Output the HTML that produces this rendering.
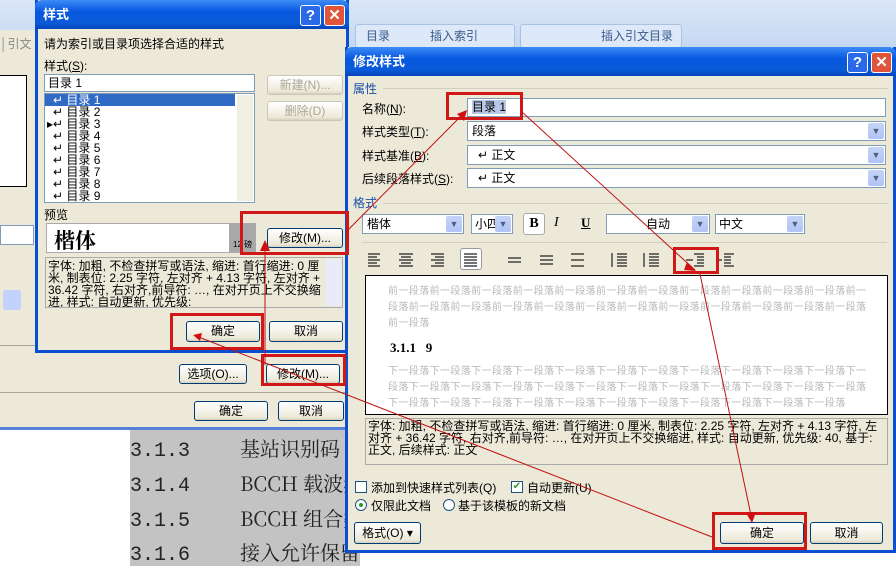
<!DOCTYPE html>
<html><head><meta charset="utf-8"><style>
*{margin:0;padding:0;box-sizing:border-box}
body{width:896px;height:566px;overflow:hidden;position:relative;background:#fff;font-family:"Liberation Sans","Noto Sans CJK SC",sans-serif;font-size:12px;color:#000}
.a{position:absolute}
.btn{position:absolute;border:1px solid #003c74;border-radius:3px;background:linear-gradient(#fff,#ece9d8 85%,#d6d0c0);text-align:center;font-size:12px;line-height:19px}
.dis{color:#aca899;border-color:#c9c7ba}
.inp{position:absolute;background:#fff;border:1px solid #7f9db9}
.dd{position:absolute;right:1px;top:1px;bottom:1px;width:16px;background:linear-gradient(#c6d3f7,#b1c4f5);border-radius:2px;color:#4d6185;font-size:9px;text-align:center;line-height:17px}
.title{position:absolute;left:0;right:0;top:0;height:29px;background:linear-gradient(#3d8cf6,#0858e0 40%,#0a5ad8 80%,#0443b8);color:#fff;font-weight:bold;font-size:13px;line-height:29px;padding-left:8px;border-radius:7px 7px 0 0}
.tb{position:absolute;top:5px;width:21px;height:21px;border:1px solid #fff;border-radius:3px;color:#fff;font-weight:bold;text-align:center;line-height:19px;font-size:15px}
.red{position:absolute;border:3px solid #d01818}
.g{color:#b8b8b8;font-size:10px;line-height:16px;letter-spacing:0.4px}
.doc{position:absolute;left:0;white-space:nowrap}
.doc b{font-weight:normal;font-family:"Liberation Mono",monospace;display:inline-block;width:110px}
</style></head><body>
<div class="a" style="left:0;top:0;width:896px;height:48px;background:linear-gradient(#dbe7f7,#c4d8f2)"></div>
<div class="a" style="left:355px;top:24px;width:160px;height:24px;background:#dde9f8;border:1px solid #aac2e3;border-radius:3px;color:#3a5a8c;font-size:12px;line-height:22px;padding-left:10px">目录&nbsp;&nbsp;&nbsp;&nbsp;&nbsp;&nbsp;&nbsp;&nbsp;&nbsp;&nbsp;&nbsp;&nbsp;插入索引</div>
<div class="a" style="left:520px;top:24px;width:162px;height:24px;background:#dde9f8;border:1px solid #aac2e3;border-radius:3px;color:#3a5a8c;font-size:12px;line-height:22px;padding-left:80px">插入引文目录</div>
<div class="a" style="left:0;top:30px;width:348px;height:400px;background:#ece9d8;border-bottom:3px solid #5a7edc"></div>
<div class="a" style="left:0;top:35px;width:34px;height:16px;color:#888;font-size:12px">│引文</div>
<div class="a" style="left:0;top:75px;width:27px;height:112px;background:#fff;border:1px solid #000;border-left:none"></div>
<div class="a" style="left:0;top:225px;width:34px;height:20px;background:#fff;border:1px solid #7f9db9"></div>
<div class="a" style="left:3px;top:290px;width:18px;height:20px;background:#c1d3fb;border-radius:2px"></div>
<div class="a" style="left:0;top:345px;width:35px;height:1px;background:#aca899"></div>
<div class="btn" style="left:179px;top:364px;width:68px;height:20px">选项(O)...</div>
<div class="btn" style="left:266px;top:364px;width:74px;height:20px">修改(M)...</div>
<div class="a" style="left:0;top:392px;width:348px;height:1px;background:#aca899"></div>
<div class="btn" style="left:194px;top:401px;width:74px;height:20px">确定</div>
<div class="btn" style="left:278px;top:401px;width:66px;height:20px">取消</div>
<div class="a" style="left:130px;top:430px;width:230px;height:136px;background:#c3c3c3;font-family:'Noto Serif CJK SC',serif;font-size:20px;color:#222;overflow:hidden">
<div class="doc" style="top:3px"><b>3.1.3</b>基站识别码</div>
<div class="doc" style="top:38px"><b>3.1.4</b>BCCH 载波频</div>
<div class="doc" style="top:73px"><b>3.1.5</b>BCCH 组合类</div>
<div class="doc" style="top:107px"><b>3.1.6</b>接入允许保留块数</div>
</div>
<div class="a" style="left:35px;top:0;width:314px;height:353px;background:#ece9d8;border:3px solid #0a4fd0;border-top:none">
<div class="title" style="left:-3px;right:-3px">样式
<div class="tb" style="right:28px;background:#2a6ae8">?</div>
<div class="tb" style="right:4px;background:#e0553a">✕</div></div>
<div class="a" style="left:6px;top:35px">请为索引或目录项选择合适的样式</div>
<div class="a" style="left:6px;top:57px">样式(<u>S</u>):</div>
<div class="inp" style="left:6px;top:74px;width:211px;height:18px;padding-left:3px;line-height:16px">目录 1</div>
<div class="inp" style="left:6px;top:93px;width:211px;height:110px;line-height:12px;font-size:12px">
<div style="background:#316ac5;color:#fff;width:190px;padding-left:8px">↵ 目录 1</div>
<div style="padding-left:8px">↵ 目录 2</div><div style="padding-left:2px">▸↵ 目录 3</div><div style="padding-left:8px">↵ 目录 4</div><div style="padding-left:8px">↵ 目录 5</div><div style="padding-left:8px">↵ 目录 6</div><div style="padding-left:8px">↵ 目录 7</div><div style="padding-left:8px">↵ 目录 8</div><div style="padding-left:8px">↵ 目录 9</div>
<div class="a" style="right:1px;top:1px;width:16px;bottom:1px;background:#f1efe2"></div></div>
<div class="btn dis" style="left:229px;top:75px;width:76px;height:20px">新建(N)...</div>
<div class="btn dis" style="left:229px;top:101px;width:76px;height:20px">删除(D)</div>
<div class="a" style="left:6px;top:206px">预览</div>
<div class="a" style="left:8px;top:223px;width:210px;height:30px;background:#fff;border:1px solid #aaa">
<div class="a" style="left:7px;top:1px;font-size:21px;font-weight:bold;font-family:'Noto Serif CJK SC',serif">楷体</div>
<div class="a" style="right:0;top:0;width:26px;height:28px;background:#a8a8a8;font-size:8px;padding-top:15px;padding-left:4px">12 磅</div></div>
<div class="btn" style="left:229px;top:228px;width:76px;height:20px">修改(M)...</div>
<div class="a" style="left:7px;top:257px;width:298px;height:51px;background:#ece9d8;border:1px solid #aaa;font-size:12px;line-height:12px;padding:2px 20px 0 2px;overflow:hidden">字体: 加粗, 不检查拼写或语法, 缩进: 首行缩进: 0 厘米, 制表位: 2.25 字符, 左对齐 + 4.13 字符, 左对齐 + 36.42 字符, 右对齐,前导符: …, 在对开页上不交换缩进, 样式: 自动更新, 优先级:
<div class="a" style="right:1px;top:1px;width:15px;bottom:1px;background:#e8ecf8"></div></div>
<div class="btn" style="left:148px;top:321px;width:74px;height:21px">确定</div>
<div class="btn" style="left:231px;top:321px;width:74px;height:21px">取消</div>
</div>
<div class="a" style="left:345px;top:47px;width:551px;height:506px;background:#ece9d8;border:3px solid #0a4fd0;border-top:none">
<div class="title" style="left:-3px;right:-3px">修改样式
<div class="tb" style="right:28px;background:#2a6ae8">?</div>
<div class="tb" style="right:4px;background:#e0553a">✕</div></div>
<div class="a" style="left:5px;top:33px;color:#1b4ea8">属性</div>
<div class="a" style="left:35px;top:41px;width:505px;height:1px;background:#d0d0bf"></div>
<div class="a" style="left:14px;top:53px">名称(<u>N</u>):</div>
<div class="inp" style="left:119px;top:51px;width:419px;height:19px;padding-left:4px;line-height:17px"><span style="background:#b8c8e8">目录 1</span></div>
<div class="a" style="left:14px;top:76px">样式类型(<u>T</u>):</div>
<div class="inp" style="left:119px;top:74px;width:419px;height:20px;padding-left:4px;line-height:18px">段落<div class="dd">▼</div></div>
<div class="a" style="left:14px;top:100px">样式基准(<u>B</u>):</div>
<div class="inp" style="left:119px;top:98px;width:419px;height:20px;padding-left:10px;line-height:18px">↵ 正文<div class="dd">▼</div></div>
<div class="a" style="left:14px;top:123px">后续段落样式(<u>S</u>):</div>
<div class="inp" style="left:119px;top:121px;width:419px;height:20px;padding-left:10px;line-height:18px">↵ 正文<div class="dd">▼</div></div>
<div class="a" style="left:5px;top:147px;color:#1b4ea8">格式</div>
<div class="a" style="left:35px;top:156px;width:505px;height:1px;background:#d0d0bf"></div>
<div class="inp" style="left:14px;top:167px;width:102px;height:20px;padding-left:4px;line-height:18px">楷体<div class="dd">▼</div></div>
<div class="inp" style="left:123px;top:167px;width:42px;height:20px;padding-left:3px;line-height:18px">小四<div class="dd">▼</div></div>
<div class="a" style="left:175px;top:166px;width:22px;height:22px;border:1px solid #aaa;border-radius:3px;background:#fff;text-align:center;font-weight:bold;line-height:20px;font-family:'Liberation Serif',serif;font-size:14px">B</div>
<div class="a" style="left:206px;top:168px;font-style:italic;font-family:'Liberation Serif',serif;font-size:14px">I</div>
<div class="a" style="left:233px;top:168px;font-weight:bold;text-decoration:underline;font-family:'Liberation Serif',serif;font-size:13px">U</div>
<div class="inp" style="left:258px;top:167px;width:104px;height:20px;text-align:center;line-height:18px">自动<div class="dd">▼</div></div>
<div class="inp" style="left:367px;top:167px;width:90px;height:20px;padding-left:3px;line-height:18px">中文<div class="dd">▼</div></div>
<div class="a" style="left:14px;top:195px;width:525px;height:1px;background:#d0d0bf"></div>
<div class="a" style="left:112px;top:201px;width:22px;height:22px;border:1px solid #999;border-radius:3px;background:#fff"></div>
<svg class="a" style="left:0;top:200px" width="540" height="26">
<g stroke="#222" stroke-width="1.2">
<path d="M20 7h12M20 10h9M20 13h12M20 16h9M20 19h12"/>
<path d="M51 7h14M53 10h10M51 13h14M53 16h10M51 19h14"/>
<path d="M83 7h13M87 10h9M83 13h13M87 16h9M83 19h13"/>
<path d="M116 7h13M116 10h13M116 13h13M116 16h13M116 19h13"/>
<path d="M160 11h13M160 15h13"/>
<path d="M192 9h13M192 13h13M192 17h13"/>
<path d="M223 7h13M223 13h13M223 19h13"/>
<path d="M269 7h10M269 10h10M269 13h10M269 16h10M269 19h10M264 6v14"/>
<path d="M301 7h10M301 10h10M301 13h10M301 16h10M301 19h10M296 6v14"/>
<path d="M346 7h10M349 10h7M349 13h7M349 16h7M346 19h10M338 13h7"/>
<path d="M376 7h10M376 10h7M376 13h7M376 16h7M376 19h10M368 13h6"/>
</g></svg>
<div class="a" style="left:17px;top:228px;width:523px;height:140px;background:#fff;border:1px solid #000;overflow:hidden">
<div class="a g" style="left:22px;top:8px;width:480px">前一段落前一段落前一段落前一段落前一段落前一段落前一段落前一段落前一段落前一段落前一段落前一段落前一段落前一段落前一段落前一段落前一段落前一段落前一段落前一段落前一段落前一段落前一段落前一段落</div>
<div class="a" style="left:24px;top:64px;font-weight:bold;font-family:'Liberation Serif',serif;font-size:13px">3.1.1&nbsp;&nbsp;&nbsp;9</div>
<div class="a g" style="left:22px;top:88px;width:480px">下一段落下一段落下一段落下一段落下一段落下一段落下一段落下一段落下一段落下一段落下一段落下一段落下一段落下一段落下一段落下一段落下一段落下一段落下一段落下一段落下一段落下一段落下一段落下一段落下一段落下一段落下一段落下一段落下一段落下一段落下一段落下一段落下一段落下一段落</div></div>
<div class="a" style="left:17px;top:371px;width:523px;height:47px;border:1px solid #aaa;padding:1px 2px;font-size:12px;line-height:12px">字体: 加粗, 不检查拼写或语法, 缩进: 首行缩进: 0 厘米, 制表位: 2.25 字符, 左对齐 + 4.13 字符, 左对齐 + 36.42 字符, 右对齐,前导符: …, 在对开页上不交换缩进, 样式: 自动更新, 优先级: 40, 基于: 正文, 后续样式: 正文</div>
<div class="a" style="left:7px;top:434px;width:12px;height:12px;border:1px solid #1c5180;background:#fff"></div>
<div class="a" style="left:23px;top:432px">添加到快速样式列表(Q)</div>
<div class="a" style="left:163px;top:434px;width:12px;height:12px;border:1px solid #1c5180;background:#fff;color:#21a121;font-size:10px;line-height:10px;text-align:center">✔</div>
<div class="a" style="left:179px;top:432px">自动更新(U)</div>
<div class="a" style="left:7px;top:452px;width:12px;height:12px;border:1px solid #1c5180;border-radius:50%;background:#fff"><div class="a" style="left:3px;top:3px;width:4px;height:4px;border-radius:50%;background:#21a121"></div></div>
<div class="a" style="left:23px;top:450px">仅限此文档</div>
<div class="a" style="left:95px;top:452px;width:12px;height:12px;border:1px solid #1c5180;border-radius:50%;background:#fff"></div>
<div class="a" style="left:110px;top:450px">基于该模板的新文档</div>
<div class="btn" style="left:6px;top:475px;width:67px;height:22px;line-height:20px">格式(O) ▾</div>
<div class="btn" style="left:372px;top:475px;width:84px;height:22px;line-height:20px">确定</div>
<div class="btn" style="left:462px;top:475px;width:73px;height:22px;line-height:20px">取消</div>
</div>
<div class="red" style="left:240px;top:211px;width:109px;height:44px"></div>
<div class="red" style="left:170px;top:313px;width:94px;height:37px"></div>
<div class="red" style="left:261px;top:354px;width:85px;height:32px"></div>
<div class="red" style="left:446px;top:92px;width:77px;height:28px"></div>
<div class="red" style="left:673px;top:247px;width:46px;height:27px"></div>
<div class="red" style="left:712px;top:512px;width:95px;height:38px"></div>
<svg class="a" style="left:0;top:0" width="896" height="566">
<g stroke="#c01010" stroke-width="1" fill="none">
<line x1="265" y1="365" x2="265" y2="244"/>
<line x1="346" y1="232" x2="465" y2="112"/>
<line x1="522" y1="112" x2="695" y2="270"/>
<line x1="700" y1="274" x2="752" y2="520"/>
<line x1="196" y1="336" x2="712" y2="537"/>
</g>
<g fill="#d01010">
<polygon points="265,240 260,251 270,251"/>
<polygon points="467,110 457,114 464,121"/>
<polygon points="696,271 687,262 684,270"/>
<polygon points="752,523 746,513 756,512"/>
<polygon points="193,335 202,333 200,341"/>
</g></svg>
</body></html>
